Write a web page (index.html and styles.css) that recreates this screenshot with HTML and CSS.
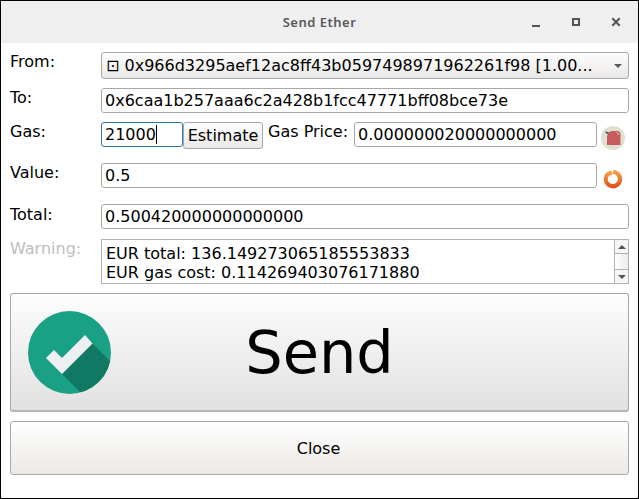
FILE: index.html
```html
<!DOCTYPE html>
<html lang="en">
<head>
<meta charset="utf-8">
<title>Send Ether</title>
<link rel="stylesheet" href="styles.css">
</head>
<body>
<div class="window">
  <header class="titlebar">
    <h1 class="title"><span>Send Ether</span></h1>
    <svg class="controls" width="96" height="12" viewBox="0 0 96 12">
      <path d="M3 10h8" stroke="#555" stroke-width="2"/>
      <path d="M44 3h6v6h-6z" fill="none" stroke="#555" stroke-width="2"/>
      <path d="M83.300 2.300l7.400 7.400M90.700 2.300l-7.400 7.400" stroke="#555" stroke-width="2"/>
    </svg>
  </header>
  <main class="content">
    <div class="row row-from">
      <label class="label">From:</label>
      <div class="combo"><span class="combo-text">⊡ 0x966d3295aef12ac8ff43b0597498971962261f98 [1.00...</span><svg class="arrow" width="8" height="4" viewBox="0 0 8 4"><path d="M0 0h8l-4 4z" fill="#5a5a5a"/></svg></div>
    </div>
    <div class="row row-to">
      <label class="label">To:</label>
      <div class="field grow">0x6caa1b257aaa6c2a428b1fcc47771bff08bce73e</div>
    </div>
    <div class="row row-gas">
      <label class="label">Gas:</label>
      <div class="field gas focused"><span>21000</span><i class="caret"></i></div>
      <div class="estimate">Estimate</div>
      <label class="price-label">Gas Price:</label>
      <div class="field grow">0.000000020000000000</div>
      <svg class="icon" width="24" height="24" viewBox="0 0 24 24">
        <circle cx="12" cy="12" r="12" fill="#e0e0d1"/>
        <path d="M4.500 5.300l5 1.700-1.500 3.300-1.300-2-2.200-1.500z" fill="#4f5d73"/>
        <path d="M6 19V10Q8 5 11 5H17q2.500 .5 2.500 3V19z" fill="#c75c5c"/>
        <path d="M15.500 6.500q2 0 2.300 2.500" fill="none" stroke="#e0e0d1" stroke-width=".8"/>
      </svg>
    </div>
    <div class="row row-value">
      <label class="label">Value:</label>
      <div class="field grow">0.5</div>
      <svg class="icon" width="24" height="24" viewBox="0 0 24 24">
        <defs><linearGradient id="ring" x1="0" y1="0" x2="0" y2="1"><stop offset="0" stop-color="#f7a64b"/><stop offset="1" stop-color="#df4f1b"/></linearGradient></defs>
        <path d="M12.500 3A9.200 9.200 0 1 1 6 5.200L8.300 4.500V3l3 2-1 4-1-1.200A5 5 0 1 0 14 7.600l-2.500-.8z" fill="url(#ring)"/>
      </svg>
    </div>
    <div class="row row-total">
      <label class="label total-label">Total:</label>
      <div class="field grow">0.500420000000000000</div>
    </div>
    <div class="row row-warning">
      <label class="label muted">Warning:</label>
      <div class="textarea">
        <div class="lines">EUR total: 136.149273065185553833<br>EUR gas cost: 0.114269403076171880</div>
        <div class="scrollbar">
          <div class="step"><svg width="8" height="4" viewBox="0 0 8 4"><path d="M0 4h8l-4-4z" fill="#555"/></svg></div>
          <div class="thumb"></div>
          <div class="step"><svg width="8" height="4" viewBox="0 0 8 4"><path d="M0 0h8l-4 4z" fill="#555"/></svg></div>
        </div>
      </div>
    </div>
    <div class="send">
      <svg class="check" width="84" height="84" viewBox="0 0 84 84">
        <defs><clipPath id="disc"><circle cx="41.500" cy="41.500" r="41.500"/></clipPath></defs>
        <circle cx="41.500" cy="41.500" r="41.500" fill="#1aa085"/>
        <path d="M64.500 32.500L94 62 63 92 34 63z" fill="#107863" clip-path="url(#disc)"/>
        <path d="M18 47l8-8 8 8 23-23 7.500 8.500L34 63z" fill="#ecf0f1"/>
      </svg>
      <span class="send-text">Send</span>
    </div>
    <div class="close">Close</div>
  </main>
</div>
</body>
</html>
```

FILE: styles.css
```css
* { box-sizing: border-box; }
body { margin: 0; background: #000; font: 16px/19px "DejaVu Sans", sans-serif; color: #000; overflow: hidden; }
svg { display: block; flex: none; }
.window { width: 639px; height: 499px; background: #fff; border: 1px solid #000; border-radius: 2px; overflow: hidden; }
.titlebar { height: 42px; background: #efefef; display: grid; grid-template-columns: 1fr; align-items: center; }
.title { grid-area: 1 / 1; margin: 0; text-align: center; font: 600 13px/20px "Noto Sans", sans-serif; letter-spacing: .5px; color: #5a5a5a; }
.controls { grid-area: 1 / 1; justify-self: end; margin-right: 13px; }
.content { padding: 9px 9px 0; }
.row { display: flex; align-items: flex-start; white-space: nowrap; }
.row-from { height: 36px; }
.row-to { height: 34px; }
.row-gas, .row-value { height: 41px; }
.row-total { height: 35px; }
.row-warning { height: 54px; }
.label { width: 91px; flex: none; }
.total-label { padding-top: 1px; }
.muted { color: #bebebe; }
.field { height: 25px; border: 1px solid #aaa8a6; border-radius: 3px; background: #fff; padding: 2px 3px; line-height: 20px; }
.grow { flex: 1; }
.combo { flex: 1; height: 27px; border: 1px solid #aaa8a6; border-radius: 3px; padding: 0 6px 0 4px; display: flex; align-items: center; background: linear-gradient(#fdfdfd, #ebe9e7); }
.combo-text { flex: 1; }
.gas { width: 82px; display: flex; }
.focused { border-color: #2f76a8; }
.caret { width: 1px; height: 19px; background: #000; }
.estimate { width: 80px; height: 27px; border: 1px solid #aaa8a6; border-radius: 3px; text-align: center; line-height: 25px; background: linear-gradient(#fdfdfd, #ebe9e7); }
.price-label { width: 86px; margin-left: 5px; }
.icon { margin: 4px 4px 0; }
.textarea { flex: 1; height: 45px; border: 1px solid #b4b2b0; display: flex; justify-content: space-between; }
.lines { padding: 4px; }
.scrollbar { width: 14px; border-left: 1px solid #b4b2b0; display: flex; flex-direction: column; background: #f7f6f5; }
.step { height: 13px; display: flex; align-items: center; justify-content: center; }
.thumb { flex: 1; border: solid #b4b2b0; border-width: 1px 0; background: linear-gradient(90deg, #fff, #eeecea); }
.send { height: 119px; border: 1px solid #a8a8a8; border-bottom: 2px solid #b5b5b5; border-radius: 3px; background: linear-gradient(#fdfdfd, #e1e1e1); display: grid; align-items: center; padding-top: 2px; }
.check { grid-area: 1 / 1; margin-left: 17px; }
.send-text { grid-area: 1 / 1; text-align: center; font-size: 59px; line-height: 70px; }
.close { height: 54px; margin-top: 9px; border: 1px solid #aaa8a6; border-radius: 3px; background: linear-gradient(#fff, #ebe9e6); text-align: center; line-height: 54px; padding-right: 2px; }
```
